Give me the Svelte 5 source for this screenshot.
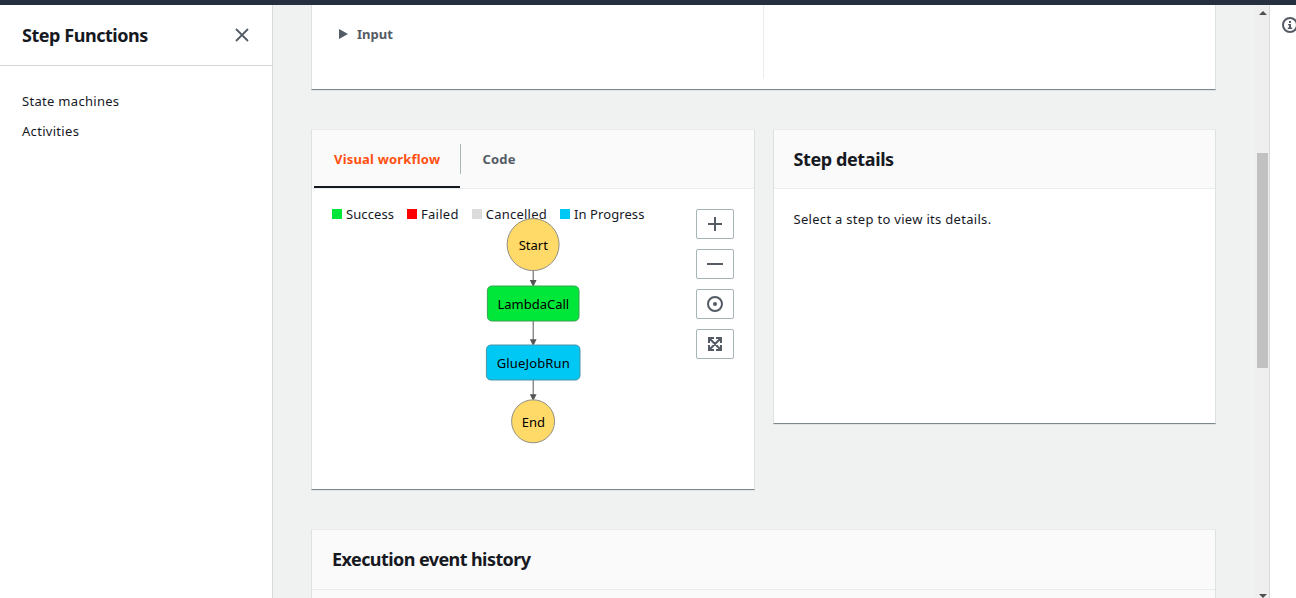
<script>
  const legend = [
    { label: 'Success', color: '#00e639', spacing: 0.08 },
    { label: 'Failed', color: '#ff0000', spacing: 0.27 },
    { label: 'Cancelled', color: '#dcdcdc', spacing: 0.24 },
    { label: 'In Progress', color: '#00c8f5', spacing: 0.08 }
  ];
</script>

<div class="shell">
  <div class="topbar"></div>
  <div class="body">
    <nav class="side">
      <header class="side-head">
        <h2>Step Functions</h2>
        <svg width="14" height="14" viewBox="0 0 14 14"><path d="M1 1 L13 13 M13 1 L1 13" stroke="#545b64" stroke-width="1.8" fill="none" /></svg>
      </header>
      <ul>
        <li>State machines</li>
        <li>Activities</li>
      </ul>
    </nav>

    <main>
      <section class="card summary">
        <div class="expander">
          <svg width="9" height="10" viewBox="0 0 9 10"><path d="M0 0 L9 5 L0 10 Z" fill="#545b64" /></svg>
          <span>Input</span>
        </div>
        <div class="column"></div>
      </section>

      <div class="row">
        <section class="card workflow">
          <div class="tabs">
            <div class="tab active">Visual workflow</div>
            <div class="divider"></div>
            <div class="tab code">Code</div>
          </div>
          <div class="canvas">
            <div class="legend">
              {#each legend as item}
                <span class="key" style="letter-spacing: {item.spacing}px"><i style="background: {item.color}"></i>{item.label}</span>
              {/each}
            </div>
            <svg class="graph" width="110" height="240" viewBox="478 210 110 240">
              <g stroke="#555" stroke-width="1">
                <path d="M533.2 270 V281 M533.2 321 V340 M533.2 380 V395" fill="none" />
              </g>
              <g fill="#555">
                <path d="M529.8 280 H536.6 L533.2 287 Z M529.8 339.3 H536.6 L533.2 346 Z M529.8 394.3 H536.6 L533.2 401 Z" />
              </g>
              <g stroke="#8f8f83" stroke-width="1">
                <circle cx="533.1" cy="244.6" r="26" fill="#ffda68" />
                <rect x="487.4" y="286" width="91.6" height="35" rx="4.5" fill="#00e639" stroke="#36a352" />
                <rect x="486.4" y="345" width="93.6" height="35" rx="4.5" fill="#00c8f5" stroke="#4b93a5" />
                <circle cx="533.1" cy="421.3" r="21.5" fill="#ffda68" />
              </g>
              <g class="labels">
                <text x="533.3" y="250">Start</text>
                <text x="533.3" y="309">LambdaCall</text>
                <text x="533.3" y="368" class="wide">GlueJobRun</text>
                <text x="533.3" y="427">End</text>
              </g>
            </svg>
            <div class="tools">
              <button aria-label="Zoom in"><svg width="16" height="16" viewBox="0 0 16 16"><path d="M8 1 V15 M1 8 H15" /></svg></button>
              <button aria-label="Zoom out"><svg width="16" height="16" viewBox="0 0 16 16"><path d="M0 8 H16" /></svg></button>
              <button aria-label="Center"><svg width="16" height="16" viewBox="0 0 16 16"><circle cx="8" cy="8" r="7" /><circle cx="8" cy="8" r="2" class="dot" /></svg></button>
              <button aria-label="Fit"><svg width="16" height="16" viewBox="0 0 16 16"><path d="M2 7 V2 H7 M9 2 H14 V7 M14 9 V14 H9 M7 14 H2 V9 M2 2 L14 14 M14 2 L2 14" /></svg></button>
            </div>
          </div>
        </section>

        <section class="card details">
          <header class="card-head"><h2 class="t-details">Step details</h2></header>
          <p>Select a step to view its details.</p>
        </section>
      </div>

      <section class="card history">
        <header class="card-head"><h2 class="t-history">Execution event history</h2></header>
        <div class="fill"></div>
      </section>
    </main>

    <div class="scroll">
      <svg width="8" height="4" viewBox="0 0 8 4"><path d="M0 4 L4 0 L8 4 Z" fill="#505050" /></svg>
      <div class="thumb"></div>
      <svg class="down" width="8" height="4" viewBox="0 0 8 4"><path d="M0 0 H8 L4 4 Z" fill="#505050" /></svg>
    </div>

    <aside>
      <svg width="16" height="16" viewBox="0 0 16 16"><circle cx="8" cy="8" r="7" fill="none" stroke="#545b64" stroke-width="2" /><path d="M7 4 H9 V6 H7 Z M6 7 H9 V10.5 H10.2 V12 H5.8 V10.5 H7 V8.3 H6 Z" fill="#545b64" /></svg>
    </aside>
  </div>
</div>

<style>
  :global(body) { margin: 0; overflow: hidden; }
  .shell {
    width: 1296px; height: 598px; overflow: hidden;
    display: flex; flex-direction: column;
    font-family: "Noto Sans", "Open Sans", sans-serif;
    font-size: 13px; line-height: 20px; color: #16191f;
    background: #fff;
  }
  .shell * { box-sizing: border-box; }
  svg { display: block; flex: none; }
  .topbar { height: 5px; flex: none; background: #252f40; }
  .body { flex: 1; min-height: 0; display: flex; }
  h2 { margin: 0; font-size: 18px; line-height: 22px; font-weight: 700; white-space: nowrap; }

  .side { width: 273px; flex: none; border-right: 1px solid #d5dbdb; }
  .side-head {
    height: 61px; padding: 0 23px 0 22px;
    display: flex; align-items: center; justify-content: space-between;
    border-bottom: 1px solid #d0d5d5;
  }
  .side-head h2 { letter-spacing: -0.46px; }
  .side ul { list-style: none; margin: 0; padding: 25px 22px; display: flex; flex-direction: column; gap: 10px; letter-spacing: 0.3px; }

  main {
    width: 982px; flex: none; padding: 0 39px 0 38px; background: #f0f2f2;
    display: flex; flex-direction: column; gap: 39px; overflow: hidden;
  }
  .card {
    flex: none; background: #fff;
    border: 1px solid #dce1e1; border-top-color: #e8ebeb; border-bottom-color: #7c878c;
    box-shadow: 0 1px 0 #e0e4e5;
  }
  .summary { height: 85px; border-top: 0; display: flex; }
  .expander { width: 451px; padding: 19px 0 0 27px; display: flex; gap: 9px; font-weight: 700; color: #545b64; }
  .expander svg { margin-top: 5px; }
  .column { height: 74px; flex: 1; border-left: 1px solid #eaeded; }

  .row { display: flex; align-items: flex-start; gap: 18px; flex: none; }
  .workflow { width: 444px; height: 361px; }
  .details { width: 443px; height: 295px; }
  .tabs { height: 59px; padding-left: 2px; display: flex; background: #fafafa; border-bottom: 1px solid #eaeded; font-weight: 700; color: #545b64; }
  .tab { height: 58px; padding: 19px 0 0 20px; white-space: nowrap; }
  .active { width: 146px; color: #ff5010; border-bottom: 2px solid #16191f; letter-spacing: 0.19px; }
  .divider { width: 1px; height: 30px; margin-top: 14px; background: #aab7b8; }
  .code { padding-left: 21.5px; letter-spacing: 0.15px; }
  .canvas { position: relative; height: 300px; padding: 15px 20px; }
  .legend { display: flex; gap: 13px; }
  .key { display: flex; align-items: center; gap: 4px; white-space: nowrap; }
  .key i { width: 10px; height: 10px; }
  .graph { position: absolute; left: 166px; top: 21px; }
  .labels { font-size: 13px; text-anchor: middle; fill: #000; }
  .wide { letter-spacing: 0.15px; }
  .tools { position: absolute; right: 20px; top: 20px; display: flex; flex-direction: column; gap: 10px; }
  .tools button {
    width: 38px; height: 30px; padding: 0; background: #fff;
    border: 1px solid #a4b4b5; border-radius: 2px;
    display: flex; align-items: center; justify-content: center;
  }
  .tools svg { fill: none; stroke: #545b64; stroke-width: 2; }
  .tools .dot { fill: #545b64; stroke: none; }

  .card-head { height: 59px; padding: 0 19.5px; display: flex; align-items: center; background: #fafafa; border-bottom: 1px solid #eaeded; }
  .details p { margin: 0; padding: 20px 19.5px; letter-spacing: 0.3px; }
  .t-details { letter-spacing: -0.4px; }
  .t-history { letter-spacing: -0.58px; }
  .history { height: 120px; }
  .history .card-head { height: 60px; padding: 0 20px 1px; }
  .fill { height: 58px; background: #fafafa; }

  .scroll { width: 15px; flex: none; background: #efefef; border-right: 1px solid #d5dbdb; display: flex; flex-direction: column; padding: 6px 1px 0 2px; }
  .scroll svg { align-self: center; }
  .thumb { height: 215px; margin-top: 138px; background: #c1c1c1; }
  .down { margin-top: 226px; }
  aside { flex: 1; min-width: 0; overflow: hidden; padding: 12px 0 0 12px; }
</style>
